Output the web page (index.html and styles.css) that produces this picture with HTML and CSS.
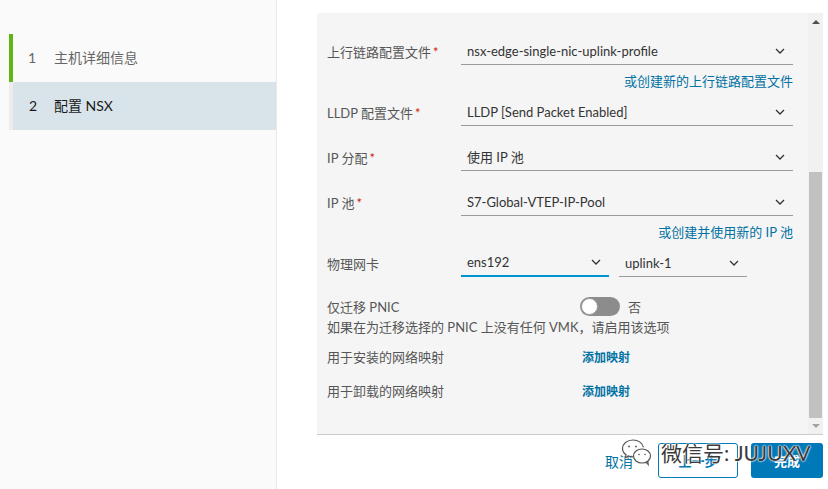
FILE: index.html
```html
<!DOCTYPE html>
<html lang="zh-CN">
<head>
    <meta charset="UTF-8">
    <meta name="viewport" content="width=device-width, initial-scale=1.0">
    <title>配置 NSX</title>
    <link rel="stylesheet" href="styles.css">
</head>
<body>
    <div class="wizard">
        <!-- steps -->
        <nav class="steps">
            <div class="step done"><span class="num">1</span><span>主机详细信息</span></div>
            <div class="step active"><span class="num">2</span><span>配置 NSX</span></div>
        </nav>

        <main class="main">
            <div class="panel">
                <div class="form">
                    <div class="field">
                        <label>上行链路配置文件<i>*</i></label>
                        <div class="select"><span>nsx-edge-single-nic-uplink-profile</span><svg class="chev" viewBox="0 0 10 6"><path d="M1 1l4 4 4-4"/></svg></div>
                    </div>
                    <a class="create" href="#">或创建新的上行链路配置文件</a>

                    <div class="field">
                        <label>LLDP 配置文件<i>*</i></label>
                        <div class="select"><span>LLDP [Send Packet Enabled]</span><svg class="chev" viewBox="0 0 10 6"><path d="M1 1l4 4 4-4"/></svg></div>
                    </div>

                    <div class="field gap">
                        <label>IP 分配<i>*</i></label>
                        <div class="select"><span>使用 IP 池</span><svg class="chev" viewBox="0 0 10 6"><path d="M1 1l4 4 4-4"/></svg></div>
                    </div>

                    <div class="field gap">
                        <label>IP 池<i>*</i></label>
                        <div class="select"><span>S7-Global-VTEP-IP-Pool</span><svg class="chev" viewBox="0 0 10 6"><path d="M1 1l4 4 4-4"/></svg></div>
                    </div>
                    <a class="create" href="#">或创建并使用新的 IP 池</a>

                    <div class="field nics">
                        <label>物理网卡</label>
                        <div class="pair">
                            <div class="select small focus"><span>ens192</span><svg class="chev" viewBox="0 0 10 6"><path d="M1 1l4 4 4-4"/></svg></div>
                            <div class="select small"><span>uplink-1</span><svg class="chev" viewBox="0 0 10 6"><path d="M1 1l4 4 4-4"/></svg></div>
                        </div>
                    </div>

                    <div class="row toggle-row">
                        <label>仅迁移 PNIC</label>
                        <div class="toggle"><span class="switch"><span class="knob"></span></span><span>否</span></div>
                    </div>
                    <p class="help">如果在为迁移选择的 PNIC 上没有任何 VMK，请启用该选项</p>

                    <div class="row map-row">
                        <label>用于安装的网络映射</label>
                        <a class="add" href="#">添加映射</a>
                    </div>
                    <div class="row map-row second">
                        <label>用于卸载的网络映射</label>
                        <a class="add" href="#">添加映射</a>
                    </div>
                </div>

                <div class="scrollbar">
                    <span class="arrow up"></span>
                    <span class="thumb"></span>
                    <span class="arrow down"></span>
                </div>
            </div>

            <div class="footer">
                <a class="cancel" href="#">取消</a>
                <button class="btn outline">上一步</button>
                <button class="btn primary">完成</button>
            </div>
        </main>
    </div>

    <!-- watermark over the footer -->
    <div class="watermark">
        <svg class="wechat" viewBox="0 0 34 30">
            <path d="M13 3c-6 0-10.5 4-10.5 8.5 0 2.6 1.4 4.8 3.6 6.3l-.9 3 3.4-1.7c1.4.4 2.8.7 4.4.7"/>
            <path d="M13 3c5.4 0 9.7 3.2 10.4 7.4"/>
            <ellipse cx="22" cy="19" rx="8.5" ry="7"/>
            <path d="M26 25.2l2.2 2.3-.4-3.4"/>
            <circle cx="9" cy="9.5" r=".9"/>
            <circle cx="16" cy="9.5" r=".9"/>
            <circle cx="19" cy="17.5" r=".8"/>
            <circle cx="25" cy="17.5" r=".8"/>
        </svg>
        <span>微信号: JUJUXV</span>
    </div>
</body>
</html>
```

FILE: styles.css
```css
body {
    margin: 0;
    font-family: Lato, "Noto Sans CJK SC", sans-serif;
    font-size: 13px;
    color: #565656;
    background-color: #ffffff;
}
.wizard {
    display: flex;
    height: 489px;
}
a {
    text-decoration: none;
    color: #0072a3;
}

/* steps */
.steps {
    width: 276px;
    flex-shrink: 0;
    background-color: #fafafa;
    border-right: 1px solid #e8e8e8;
    padding-top: 34px;
}
.step {
    display: flex;
    align-items: center;
    height: 46px;
    padding-bottom: 2px;
    margin-left: 9px;
    border-left: 4px solid #ececec;
    font-size: 14px;
}
.step .num {
    width: 26px;
    padding-left: 15px;
}
.step.done {
    border-left-color: #60b515;
    color: #666;
}
.step.active {
    background-color: #d8e3ea;
    color: #1a1a1a;
}
.step.active .num {
    width: 25px;
    padding-left: 16px;
}

/* main */
.main {
    flex: 1;
    padding: 13px 5px 0 40px;
}
.panel {
    display: flex;
    height: 421px;
    background-color: #f5f5f5;
    border-bottom: 1px solid #cccccc;
}
.form {
    flex: 1;
    padding: 24px 12px 0 10px;
}
.field {
    display: grid;
    grid-template-columns: 134px 332px;
    align-items: center;
    height: 28px;
}
.field.gap {
    margin-top: 17px;
}
.field label i {
    color: #c92100;
    font-style: normal;
    margin-left: 2px;
}
.select {
    display: flex;
    align-items: center;
    justify-content: space-between;
    height: 27px;
    padding: 0 8px 0 6px;
    border-bottom: 1px solid #9a9a9a;
    color: #333;
}
.chev {
    width: 10px;
    height: 6px;
    fill: none;
    stroke: #333;
    stroke-width: 1.3;
}
.create {
    display: block;
    width: 466px;
    text-align: right;
    line-height: 16px;
    margin: 8px 0 9px;
}
.pair {
    display: flex;
    gap: 10px;
}
.select.small {
    width: 134px;
}
.select.small + .select.small {
    width: 114px;
}
.select.focus {
    height: 26px;
    border-bottom: 2px solid #0094d2;
}

.row {
    display: grid;
    grid-template-columns: 253px auto;
    align-items: center;
}
.toggle-row {
    margin-top: 19px;
    height: 20px;
}
.toggle {
    display: flex;
    align-items: center;
    gap: 8px;
}
.switch {
    display: block;
    width: 40px;
    height: 19px;
    border-radius: 10px;
    background-color: #8c8c8c;
    position: relative;
}
.knob {
    position: absolute;
    left: 1px;
    top: 1px;
    width: 15px;
    height: 15px;
    border-radius: 50%;
    background-color: #fff;
    border: 1px solid #9a9a9a;
}
.help {
    margin: 3px 0 0;
    line-height: 16px;
}
.map-row {
    margin-top: 12px;
    height: 16px;
}
.map-row.second {
    margin-top: 18px;
}
.add {
    font-weight: bold;
    font-size: 12px;
    padding-left: 2px;
}

/* scrollbar */
.scrollbar {
    width: 15px;
    background-color: #f1f1f1;
    display: flex;
    flex-direction: column;
    align-items: center;
}
.arrow {
    width: 0;
    height: 0;
    border-left: 4px solid transparent;
    border-right: 4px solid transparent;
}
.arrow.up {
    margin-top: 7px;
    border-bottom: 4px solid #505050;
}
.arrow.down {
    margin-top: 6px;
    border-top: 4px solid #a3a3a3;
}
.thumb {
    width: 13px;
    height: 246px;
    margin-top: 148px;
    background-color: #c1c1c1;
}

/* footer */
.footer {
    display: flex;
    justify-content: flex-end;
    align-items: center;
    padding-top: 8px;
    gap: 13px;
}
.cancel {
    font-size: 14px;
    margin-right: 12px;
}
.btn {
    height: 35px;
    border-radius: 3px;
    font-family: inherit;
    font-size: 13px;
    font-weight: bold;
    cursor: pointer;
}
.btn.outline {
    width: 80px;
    background-color: #fff;
    border: 1px solid #0079b8;
    color: #0079b8;
}
.btn.primary {
    width: 72px;
    background-color: #0079b8;
    border: none;
    color: #fff;
}

/* watermark */
.watermark {
    position: absolute;
    left: 620px;
    top: 437px;
    display: flex;
    align-items: center;
    gap: 7px;
    font-size: 21px;
    color: #3a3a3a;
    text-shadow: 0 0 2px #fff, 0 0 2px #fff, 0 0 1px #fff;
    pointer-events: none;
}
.wechat {
    width: 34px;
    height: 30px;
    fill: none;
    stroke: #555;
    stroke-width: 1.2;
    filter: drop-shadow(0 0 1px #fff);
}
.wechat circle {
    fill: #555;
    stroke: none;
}
```
